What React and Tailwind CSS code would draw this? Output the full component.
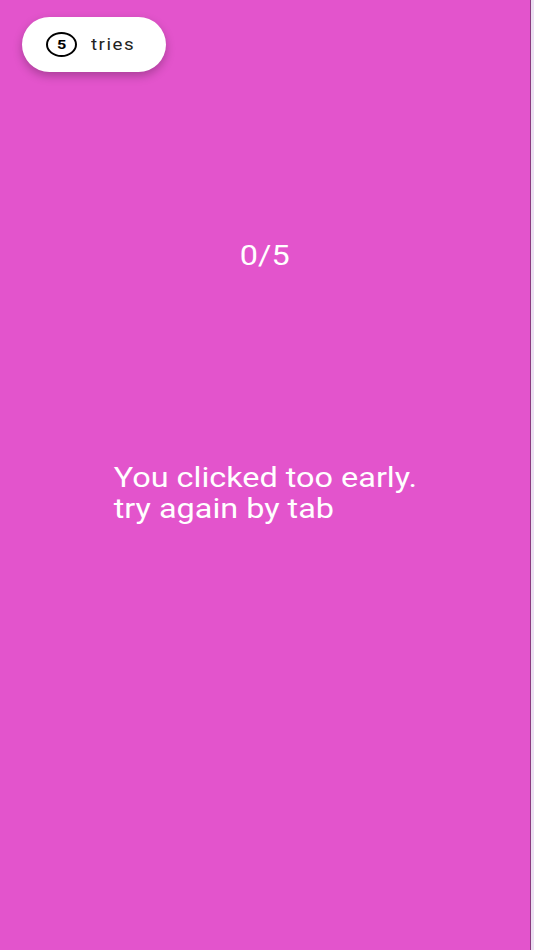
import React from 'react';

function TriesBadge({ count }) {
  return (
    <div className="flex items-center gap-[14px] bg-white rounded-full h-[55px] w-[144px] pl-[24px] shadow-[0_4px_10px_rgba(0,0,0,0.25)]">
      <div className="w-[31px] h-[25px] rounded-[50%] border-[2.5px] border-black flex items-center justify-center">
        <span className="text-[13px] font-bold text-black leading-none scale-x-[1.25]">{count}</span>
      </div>
      <span className="text-[17px] tracking-[0.08em] text-[#222] scale-x-[1.1] origin-left">tries</span>
    </div>
  );
}

export default function App() {
  return (
    <div className="h-[950px] w-[534px] flex bg-[#ece0f2] font-['Roboto',sans-serif] overflow-hidden">
      <div className="w-[531px] h-full bg-[#e354cc] border-r border-[#8a3a80] flex flex-col">
        <div className="pt-[17px] pl-[22px]">
          <TriesBadge count={5} />
        </div>

        <div className="flex justify-center mt-[171px]">
          <span className="text-white text-[27px] leading-none scale-x-[1.2]">0/5</span>
        </div>

        <div className="flex justify-center mt-[193px]">
          <p className="text-white text-[27px] leading-[31px] text-left scale-x-[1.2]">
            You clicked too early.
            <br />
            try again by tab
          </p>
        </div>
      </div>
    </div>
  );
}
